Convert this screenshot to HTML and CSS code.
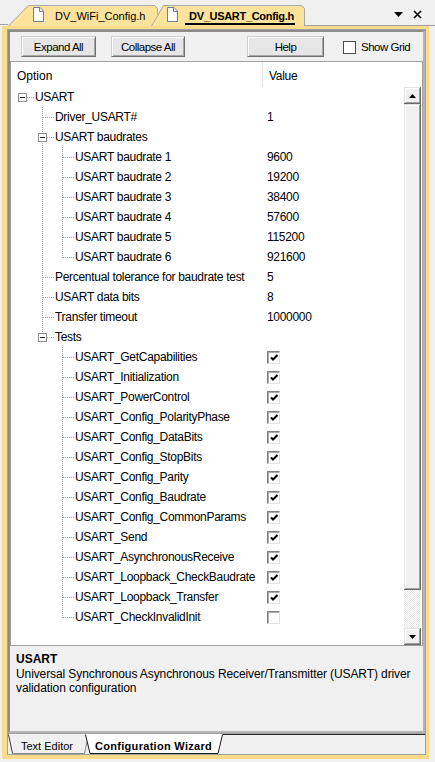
FILE: index.html
```html
<!DOCTYPE html>
<html lang="en">
<head>
<meta charset="utf-8">
<title>DV_USART_Config.h - Configuration Wizard</title>
<link rel="stylesheet" href="styles.css">
</head>
<body>
<div class="tabstrip">
  <div class="strip-edge"></div>
  <div class="ftab ftab1">
    <svg class="tabbg" width="150" height="21" viewBox="0 0 150 21"><path class="tf" d="M0 21 L20 0 H147 L150 3 V21 Z"/><path class="ts" d="M0.5 21 L20.5 0.5 H146.5 L149.5 3.5 V21"/></svg>
    <svg class="doc" width="11" height="15" viewBox="0 0 11 15"><path d="M0.5 0.5 H7 L10.5 4 V14.5 H0.5 Z" fill="#fff" stroke="#6f7f96"/><path d="M6.5 0.5 V4.5 H10.5" fill="none" stroke="#6f7f96"/></svg>
    <span class="ftitle">DV_WiFi_Config.h</span>
  </div>
  <div class="ftab ftab2">
    <svg class="tabbg" width="155" height="21" viewBox="0 0 155 21"><path class="tf" d="M1 21 L13 0 H152 L155 3 V21 Z"/><path class="ts" d="M1.5 21 L13.5 0.5 H151.5 L154.5 3.5 V21"/></svg>
    <svg class="doc" width="11" height="15" viewBox="0 0 11 15"><path d="M0.5 0.5 H7 L10.5 4 V14.5 H0.5 Z" fill="#fff" stroke="#6f7f96"/><path d="M6.5 0.5 V4.5 H10.5" fill="none" stroke="#6f7f96"/></svg>
    <span class="ftitle active">DV_USART_Config.h</span>
  </div>
  <div class="strip-fill">
    <svg class="drop" width="9" height="5" viewBox="0 0 9 5"><path d="M0 0 H9 L4.5 5 Z" fill="#000"/></svg>
    <svg class="close" width="9" height="9" viewBox="0 0 9 9"><path d="M1 1 L8 8 M8 1 L1 8" stroke="#000" stroke-width="1.6"/></svg>
  </div>
</div>

<div class="frame">
  <div class="window">
    <div class="panel">
      <div class="toolbar">
        <button class="btn b-expand">Expand All</button>
        <button class="btn b-collapse">Collapse All</button>
        <button class="btn b-help">Help</button>
        <span class="tcheck"></span><span class="tlabel">Show Grid</span>
      </div>

      <div class="tree">
        <div class="thead">
          <div class="th1">Option</div>
          <div class="th2">Value</div>
        </div>
        <div class="tbody">
          <div class="tlist">
            <div class="row"><div class="opt"><span class="g l exr"><span class="ex"></span></span><span class="lbl">USART</span></div><div class="val"></div></div>
            <div class="row"><div class="opt"><span class="g"></span><span class="g l tee"></span><span class="lbl">Driver_USART#</span></div><div class="val">1</div></div>
            <div class="row"><div class="opt"><span class="g"></span><span class="g l ext"><span class="ex"></span></span><span class="lbl">USART baudrates</span></div><div class="val"></div></div>
            <div class="row"><div class="opt"><span class="g"></span><span class="g pipe"></span><span class="g l tee"></span><span class="lbl">USART baudrate 1</span></div><div class="val">9600</div></div>
            <div class="row"><div class="opt"><span class="g"></span><span class="g pipe"></span><span class="g l tee"></span><span class="lbl">USART baudrate 2</span></div><div class="val">19200</div></div>
            <div class="row"><div class="opt"><span class="g"></span><span class="g pipe"></span><span class="g l tee"></span><span class="lbl">USART baudrate 3</span></div><div class="val">38400</div></div>
            <div class="row"><div class="opt"><span class="g"></span><span class="g pipe"></span><span class="g l tee"></span><span class="lbl">USART baudrate 4</span></div><div class="val">57600</div></div>
            <div class="row"><div class="opt"><span class="g"></span><span class="g pipe"></span><span class="g l tee"></span><span class="lbl">USART baudrate 5</span></div><div class="val">115200</div></div>
            <div class="row"><div class="opt"><span class="g"></span><span class="g pipe"></span><span class="g l ell"></span><span class="lbl">USART baudrate 6</span></div><div class="val">921600</div></div>
            <div class="row"><div class="opt"><span class="g"></span><span class="g l tee"></span><span class="lbl">Percentual tolerance for baudrate test</span></div><div class="val">5</div></div>
            <div class="row"><div class="opt"><span class="g"></span><span class="g l tee"></span><span class="lbl">USART data bits</span></div><div class="val">8</div></div>
            <div class="row"><div class="opt"><span class="g"></span><span class="g l tee"></span><span class="lbl">Transfer timeout</span></div><div class="val">1000000</div></div>
            <div class="row"><div class="opt"><span class="g"></span><span class="g l exl"><span class="ex"></span></span><span class="lbl">Tests</span></div><div class="val"></div></div>
            <div class="row"><div class="opt"><span class="g"></span><span class="g"></span><span class="g l tee"></span><span class="lbl">USART_GetCapabilities</span></div><div class="val"><span class="cb"><svg width="11" height="11" viewBox="0 0 11 11"><path d="M2 4.5 L4 6.5 L8.5 2" fill="none" stroke="#000" stroke-width="2"/></svg></span></div></div>
            <div class="row"><div class="opt"><span class="g"></span><span class="g"></span><span class="g l tee"></span><span class="lbl">USART_Initialization</span></div><div class="val"><span class="cb"><svg width="11" height="11" viewBox="0 0 11 11"><path d="M2 4.5 L4 6.5 L8.5 2" fill="none" stroke="#000" stroke-width="2"/></svg></span></div></div>
            <div class="row"><div class="opt"><span class="g"></span><span class="g"></span><span class="g l tee"></span><span class="lbl">USART_PowerControl</span></div><div class="val"><span class="cb"><svg width="11" height="11" viewBox="0 0 11 11"><path d="M2 4.5 L4 6.5 L8.5 2" fill="none" stroke="#000" stroke-width="2"/></svg></span></div></div>
            <div class="row"><div class="opt"><span class="g"></span><span class="g"></span><span class="g l tee"></span><span class="lbl">USART_Config_PolarityPhase</span></div><div class="val"><span class="cb"><svg width="11" height="11" viewBox="0 0 11 11"><path d="M2 4.5 L4 6.5 L8.5 2" fill="none" stroke="#000" stroke-width="2"/></svg></span></div></div>
            <div class="row"><div class="opt"><span class="g"></span><span class="g"></span><span class="g l tee"></span><span class="lbl">USART_Config_DataBits</span></div><div class="val"><span class="cb"><svg width="11" height="11" viewBox="0 0 11 11"><path d="M2 4.5 L4 6.5 L8.5 2" fill="none" stroke="#000" stroke-width="2"/></svg></span></div></div>
            <div class="row"><div class="opt"><span class="g"></span><span class="g"></span><span class="g l tee"></span><span class="lbl">USART_Config_StopBits</span></div><div class="val"><span class="cb"><svg width="11" height="11" viewBox="0 0 11 11"><path d="M2 4.5 L4 6.5 L8.5 2" fill="none" stroke="#000" stroke-width="2"/></svg></span></div></div>
            <div class="row"><div class="opt"><span class="g"></span><span class="g"></span><span class="g l tee"></span><span class="lbl">USART_Config_Parity</span></div><div class="val"><span class="cb"><svg width="11" height="11" viewBox="0 0 11 11"><path d="M2 4.5 L4 6.5 L8.5 2" fill="none" stroke="#000" stroke-width="2"/></svg></span></div></div>
            <div class="row"><div class="opt"><span class="g"></span><span class="g"></span><span class="g l tee"></span><span class="lbl">USART_Config_Baudrate</span></div><div class="val"><span class="cb"><svg width="11" height="11" viewBox="0 0 11 11"><path d="M2 4.5 L4 6.5 L8.5 2" fill="none" stroke="#000" stroke-width="2"/></svg></span></div></div>
            <div class="row"><div class="opt"><span class="g"></span><span class="g"></span><span class="g l tee"></span><span class="lbl">USART_Config_CommonParams</span></div><div class="val"><span class="cb"><svg width="11" height="11" viewBox="0 0 11 11"><path d="M2 4.5 L4 6.5 L8.5 2" fill="none" stroke="#000" stroke-width="2"/></svg></span></div></div>
            <div class="row"><div class="opt"><span class="g"></span><span class="g"></span><span class="g l tee"></span><span class="lbl">USART_Send</span></div><div class="val"><span class="cb"><svg width="11" height="11" viewBox="0 0 11 11"><path d="M2 4.5 L4 6.5 L8.5 2" fill="none" stroke="#000" stroke-width="2"/></svg></span></div></div>
            <div class="row"><div class="opt"><span class="g"></span><span class="g"></span><span class="g l tee"></span><span class="lbl">USART_AsynchronousReceive</span></div><div class="val"><span class="cb"><svg width="11" height="11" viewBox="0 0 11 11"><path d="M2 4.5 L4 6.5 L8.5 2" fill="none" stroke="#000" stroke-width="2"/></svg></span></div></div>
            <div class="row"><div class="opt"><span class="g"></span><span class="g"></span><span class="g l tee"></span><span class="lbl">USART_Loopback_CheckBaudrate</span></div><div class="val"><span class="cb"><svg width="11" height="11" viewBox="0 0 11 11"><path d="M2 4.5 L4 6.5 L8.5 2" fill="none" stroke="#000" stroke-width="2"/></svg></span></div></div>
            <div class="row"><div class="opt"><span class="g"></span><span class="g"></span><span class="g l tee"></span><span class="lbl">USART_Loopback_Transfer</span></div><div class="val"><span class="cb"><svg width="11" height="11" viewBox="0 0 11 11"><path d="M2 4.5 L4 6.5 L8.5 2" fill="none" stroke="#000" stroke-width="2"/></svg></span></div></div>
            <div class="row"><div class="opt"><span class="g"></span><span class="g"></span><span class="g l ell"></span><span class="lbl">USART_CheckInvalidInit</span></div><div class="val"><span class="cb"></span></div></div>
          </div>
          <div class="vscroll">
            <div class="sbtn"><svg width="7" height="4" viewBox="0 0 7 4"><path d="M0 4 H7 L3.5 0 Z" fill="#000"/></svg></div>
            <div class="sthumb"></div>
            <div class="strack"></div>
            <div class="sbtn"><svg width="7" height="4" viewBox="0 0 7 4"><path d="M0 0 H7 L3.5 4 Z" fill="#000"/></svg></div>
          </div>
        </div>
      </div>

      <div class="desc">
        <div class="dtitle">USART</div>
        <div class="dtext">Universal Synchronous Asynchronous Receiver/Transmitter (USART) driver<br>validation configuration</div>
      </div>
    </div>

    <div class="btabs">
      <div class="btab bt1">
        <svg class="tabbg" width="81" height="20" viewBox="0 0 81 20"><path d="M0 0 H81 L76.5 19.5 H4.5 Z" fill="#f0f0f0"/><path d="M0.5 0.5 L4.5 19.5" fill="none" stroke="#3a3a3a"/><path d="M4.5 19.5 H76.5 L80.5 0.5" fill="none" stroke="#8a8a8a"/></svg>
        <span class="btitle">Text Editor</span>
      </div>
      <div class="btab bt2">
        <svg class="tabbg" width="138" height="20" viewBox="0 0 138 20"><path d="M0 0 H138 L133.5 19.5 H5 Z" fill="#fff"/><path d="M0.5 0.5 L5 19.5 H133 L137.5 0.5" fill="none" stroke="#1a1a1a"/></svg>
        <span class="btitle bold">Configuration Wizard</span>
      </div>
      <div class="bfill"></div>
    </div>
  </div>
</div>
</body>
</html>
```

FILE: styles.css
```css
* { box-sizing: border-box; }
html, body { margin: 0; padding: 0; }
body {
  width: 435px;
  height: 762px;
  overflow: hidden;
  background: #f0f0f0;
  color: #000;
  font-family: "Liberation Sans", Arial, sans-serif;
  font-size: 12px;
}

/* ---------- file tabs ---------- */
.tabstrip {
  display: flex;
  align-items: flex-end;
  height: 26px;
}
.strip-edge {
  width: 8px;
  height: 1px;
  background: #a0a0a0;
  margin-bottom: 1px;
}
.ftab {
  position: relative;
  height: 21px;
  display: flex;
  align-items: flex-end;
  padding-bottom: 1px;
  flex: none;
  font-size: 11px;
}
.ftab1 { width: 150px; padding-left: 25px; }
.ftab2 { width: 155px; padding-left: 17px; margin-left: -8px; }
.tabbg { position: absolute; left: 0; top: 0; z-index: 0; }
.tf { fill: #fce29a; }
.ts { fill: none; stroke: #a8a8a8; }
.doc { position: relative; z-index: 1; flex: none; margin-bottom: 3px; }
.ftab1 .doc { margin-right: 11px; }
.ftab2 .doc { margin-right: 7px; }
.ftitle {
  position: relative;
  z-index: 1;
  display: block;
  line-height: 13px;
  border-bottom: 2px solid transparent;
  white-space: nowrap;
}
.ftitle.active {
  font-weight: bold;
  letter-spacing: -0.3px;
  padding: 0 1px 0 4px;
  border-bottom-color: #000;
}
.strip-fill {
  flex: 1;
  height: 26px;
  border-bottom: 1px solid #a0a0a0;
  display: flex;
  align-items: center;
  justify-content: flex-end;
  padding: 3px 13px 0 0;
  gap: 10px;
}

/* ---------- frame ---------- */
.frame {
  margin: 0 6px 0 2px;
  background: #fbdb8c;
  padding: 3px 3px 4px 5px;
}
.window {
  border: 1px solid #a0a0a0;
  background: #f0f0f0;
}
.panel {
  border: 2px solid;
  border-color: #8c8c8c #b4b4b4 #b4b4b4 #8c8c8c;
  background: #f0f0f0;
}

/* ---------- toolbar ---------- */
.toolbar {
  height: 29px;
  display: flex;
  align-items: flex-start;
  padding: 4px 0 0 11px;
  font-size: 11.5px;
  letter-spacing: -0.5px;
}
.btn {
  height: 21px;
  padding: 0;
  margin: 0;
  font: inherit;
  letter-spacing: inherit;
  color: #000;
  background: #e6e6e6;
  border: 1px solid;
  border-color: #cfcfcf #707070 #707070 #cfcfcf;
  box-shadow: inset 1px 1px 0 #fdfdfd, inset -1px -1px 0 #a8a8a8;
}
.b-expand { width: 75px; }
.b-collapse { width: 74px; margin-left: 15px; }
.b-help { width: 77px; margin-left: 62px; }
.tcheck {
  width: 13px;
  height: 13px;
  margin: 5px 0 0 19px;
  border: 1px solid #4a4a4a;
  background: #fff;
}
.tlabel { margin: 0 0 0 5px; line-height: 22px; }

/* ---------- tree ---------- */
.tree {
  border: 1px solid #a0a0a0;
  background: #fff;
}
.thead { display: flex; height: 25px; }
.th1 {
  width: 252px;
  border-right: 1px solid #e3e3e3;
  padding: 3px 0 0 6px;
  line-height: 22px;
}
.th2 { padding: 3px 0 0 6px; line-height: 22px; letter-spacing: -0.3px; }
.tbody { display: flex; height: 558px; }
.tlist { flex: 1; }
.row {
  display: flex;
  height: 20px;
  line-height: 20px;
  white-space: nowrap;
  letter-spacing: -0.3px;
}
.opt { width: 252px; flex: none; display: flex; padding-left: 1px; }
.val { flex: 1; display: flex; align-items: center; padding-left: 4px; }
.g {
  flex: none;
  width: 20px;
  height: 20px;
  background-repeat: no-repeat;
}
.g.l { width: 23px; }
.pipe {
  background-image: repeating-linear-gradient(to bottom, #a0a0a0 0 1px, transparent 1px 2px);
  background-size: 1px 20px;
  background-position: 10px 0;
}
.tee {
  background-image: repeating-linear-gradient(to bottom, #a0a0a0 0 1px, transparent 1px 2px),
                    repeating-linear-gradient(to right, #a0a0a0 0 1px, transparent 1px 2px);
  background-size: 1px 20px, 12px 1px;
  background-position: 10px 0, 11px 10px;
}
.ell {
  background-image: repeating-linear-gradient(to bottom, #a0a0a0 0 1px, transparent 1px 2px),
                    repeating-linear-gradient(to right, #a0a0a0 0 1px, transparent 1px 2px);
  background-size: 1px 11px, 12px 1px;
  background-position: 10px 0, 11px 10px;
}
.exr {
  background-image: repeating-linear-gradient(to right, #a0a0a0 0 1px, transparent 1px 2px);
  background-size: 8px 1px;
  background-position: 15px 10px;
}
.ext {
  background-image: repeating-linear-gradient(to bottom, #a0a0a0 0 1px, transparent 1px 2px),
                    repeating-linear-gradient(to right, #a0a0a0 0 1px, transparent 1px 2px);
  background-size: 1px 20px, 8px 1px;
  background-position: 10px 0, 15px 10px;
}
.exl {
  background-image: repeating-linear-gradient(to bottom, #a0a0a0 0 1px, transparent 1px 2px),
                    repeating-linear-gradient(to right, #a0a0a0 0 1px, transparent 1px 2px);
  background-size: 1px 7px, 8px 1px;
  background-position: 10px 0, 15px 10px;
}
.ex {
  display: block;
  width: 9px;
  height: 9px;
  margin: 6px 0 0 6px;
  border: 1px solid #919191;
  background: #fff linear-gradient(#222, #222) center / 5px 1px no-repeat;
}
.cb {
  width: 13px;
  height: 13px;
  display: block;
  background: #fff;
  border: 1px solid;
  border-color: #808080 #e3e3e3 #e3e3e3 #808080;
  box-shadow: inset 1px 1px 0 #a8a8a8;
}
.cb svg { display: block; margin: 1px 0 0 1px; }

/* scrollbar */
.vscroll {
  width: 17px;
  margin-right: 1px;
  display: flex;
  flex-direction: column;
}
.sbtn {
  height: 17px;
  display: flex;
  align-items: center;
  justify-content: center;
  background: #f0f0f0;
  box-shadow: inset -1px -1px 0 #696969, inset 1px 1px 0 #e3e3e3, inset -2px -2px 0 #a0a0a0, inset 2px 2px 0 #fff;
}
.sthumb {
  height: 486px;
  background: #f0f0f0;
  box-shadow: inset -1px -1px 0 #696969, inset 1px 1px 0 #e3e3e3, inset -2px -2px 0 #a0a0a0, inset 2px 2px 0 #fff;
}
.strack {
  flex: 1;
  background: repeating-conic-gradient(#fff 0 25%, #e6e6e6 0 50%) 0 0 / 2px 2px;
}

/* ---------- description ---------- */
.desc {
  height: 85px;
  padding: 6px 4px 0 6px;
}
.dtitle { font-weight: bold; line-height: 15px; }
.dtext { line-height: 14px; white-space: nowrap; letter-spacing: -0.1px; }

/* ---------- bottom tabs ---------- */
.btabs {
  display: flex;
  height: 21px;
  border-top: 1px solid #a0a0a0;
}
.btab {
  position: relative;
  height: 20px;
  display: flex;
  align-items: flex-end;
  flex: none;
  font-size: 11px;
}
.bt1 {
  width: 81px;
  padding-left: 13px;
  background: linear-gradient(#2a2a2a, #2a2a2a) top / 100% 1px no-repeat;
}
.bt2 {
  width: 138px;
  margin-left: -4px;
  padding-left: 10px;
  background: linear-gradient(#2a2a2a, #2a2a2a) top / 100% 1px no-repeat;
}
.btitle { position: relative; z-index: 1; line-height: 13px; margin-bottom: 1px; white-space: nowrap; }
.btitle.bold { font-weight: bold; letter-spacing: 0.3px; }
.bfill { flex: 1; border-top: 1px solid #2a2a2a; }
```
